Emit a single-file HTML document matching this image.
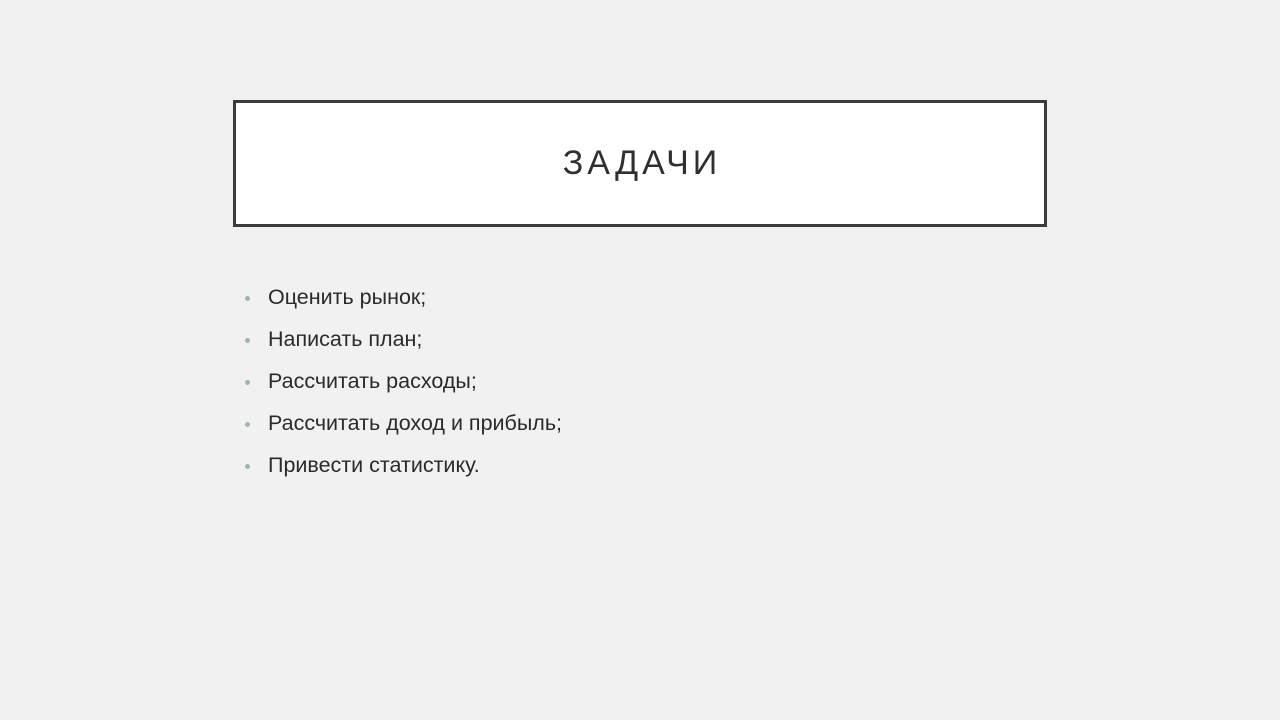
<!DOCTYPE html>
<html><head><meta charset="utf-8"><style>
body{margin:0;width:1280px;height:720px;background:#f1f1f1;font-family:"Liberation Sans","DejaVu Sans",sans-serif;position:relative;overflow:hidden}
.box{position:absolute;left:233px;top:100px;width:808px;height:121px;border:3px solid #3c3c3c;background:#fff}
.title{position:absolute;left:0;right:0;top:144px;text-align:center;font-size:34px;letter-spacing:4px;color:#2f2f2f;padding-left:4px}
.li{position:absolute;left:268px;font-size:21.5px;color:#2a2a2a}
.b{position:absolute;left:245px;width:5px;height:5px;border-radius:50%;background:#a3b2b6}
</style></head><body>
<div class="box"></div>
<div class="title">ЗАДАЧИ</div>
<div class="b" style="top:296px"></div><div class="li" style="top:285px">Оценить рынок;</div>
<div class="b" style="top:338px"></div><div class="li" style="top:327px">Написать план;</div>
<div class="b" style="top:380px"></div><div class="li" style="top:369px">Рассчитать расходы;</div>
<div class="b" style="top:422px"></div><div class="li" style="top:411px">Рассчитать доход и прибыль;</div>
<div class="b" style="top:464px"></div><div class="li" style="top:453px">Привести статистику.</div>
</body></html>
